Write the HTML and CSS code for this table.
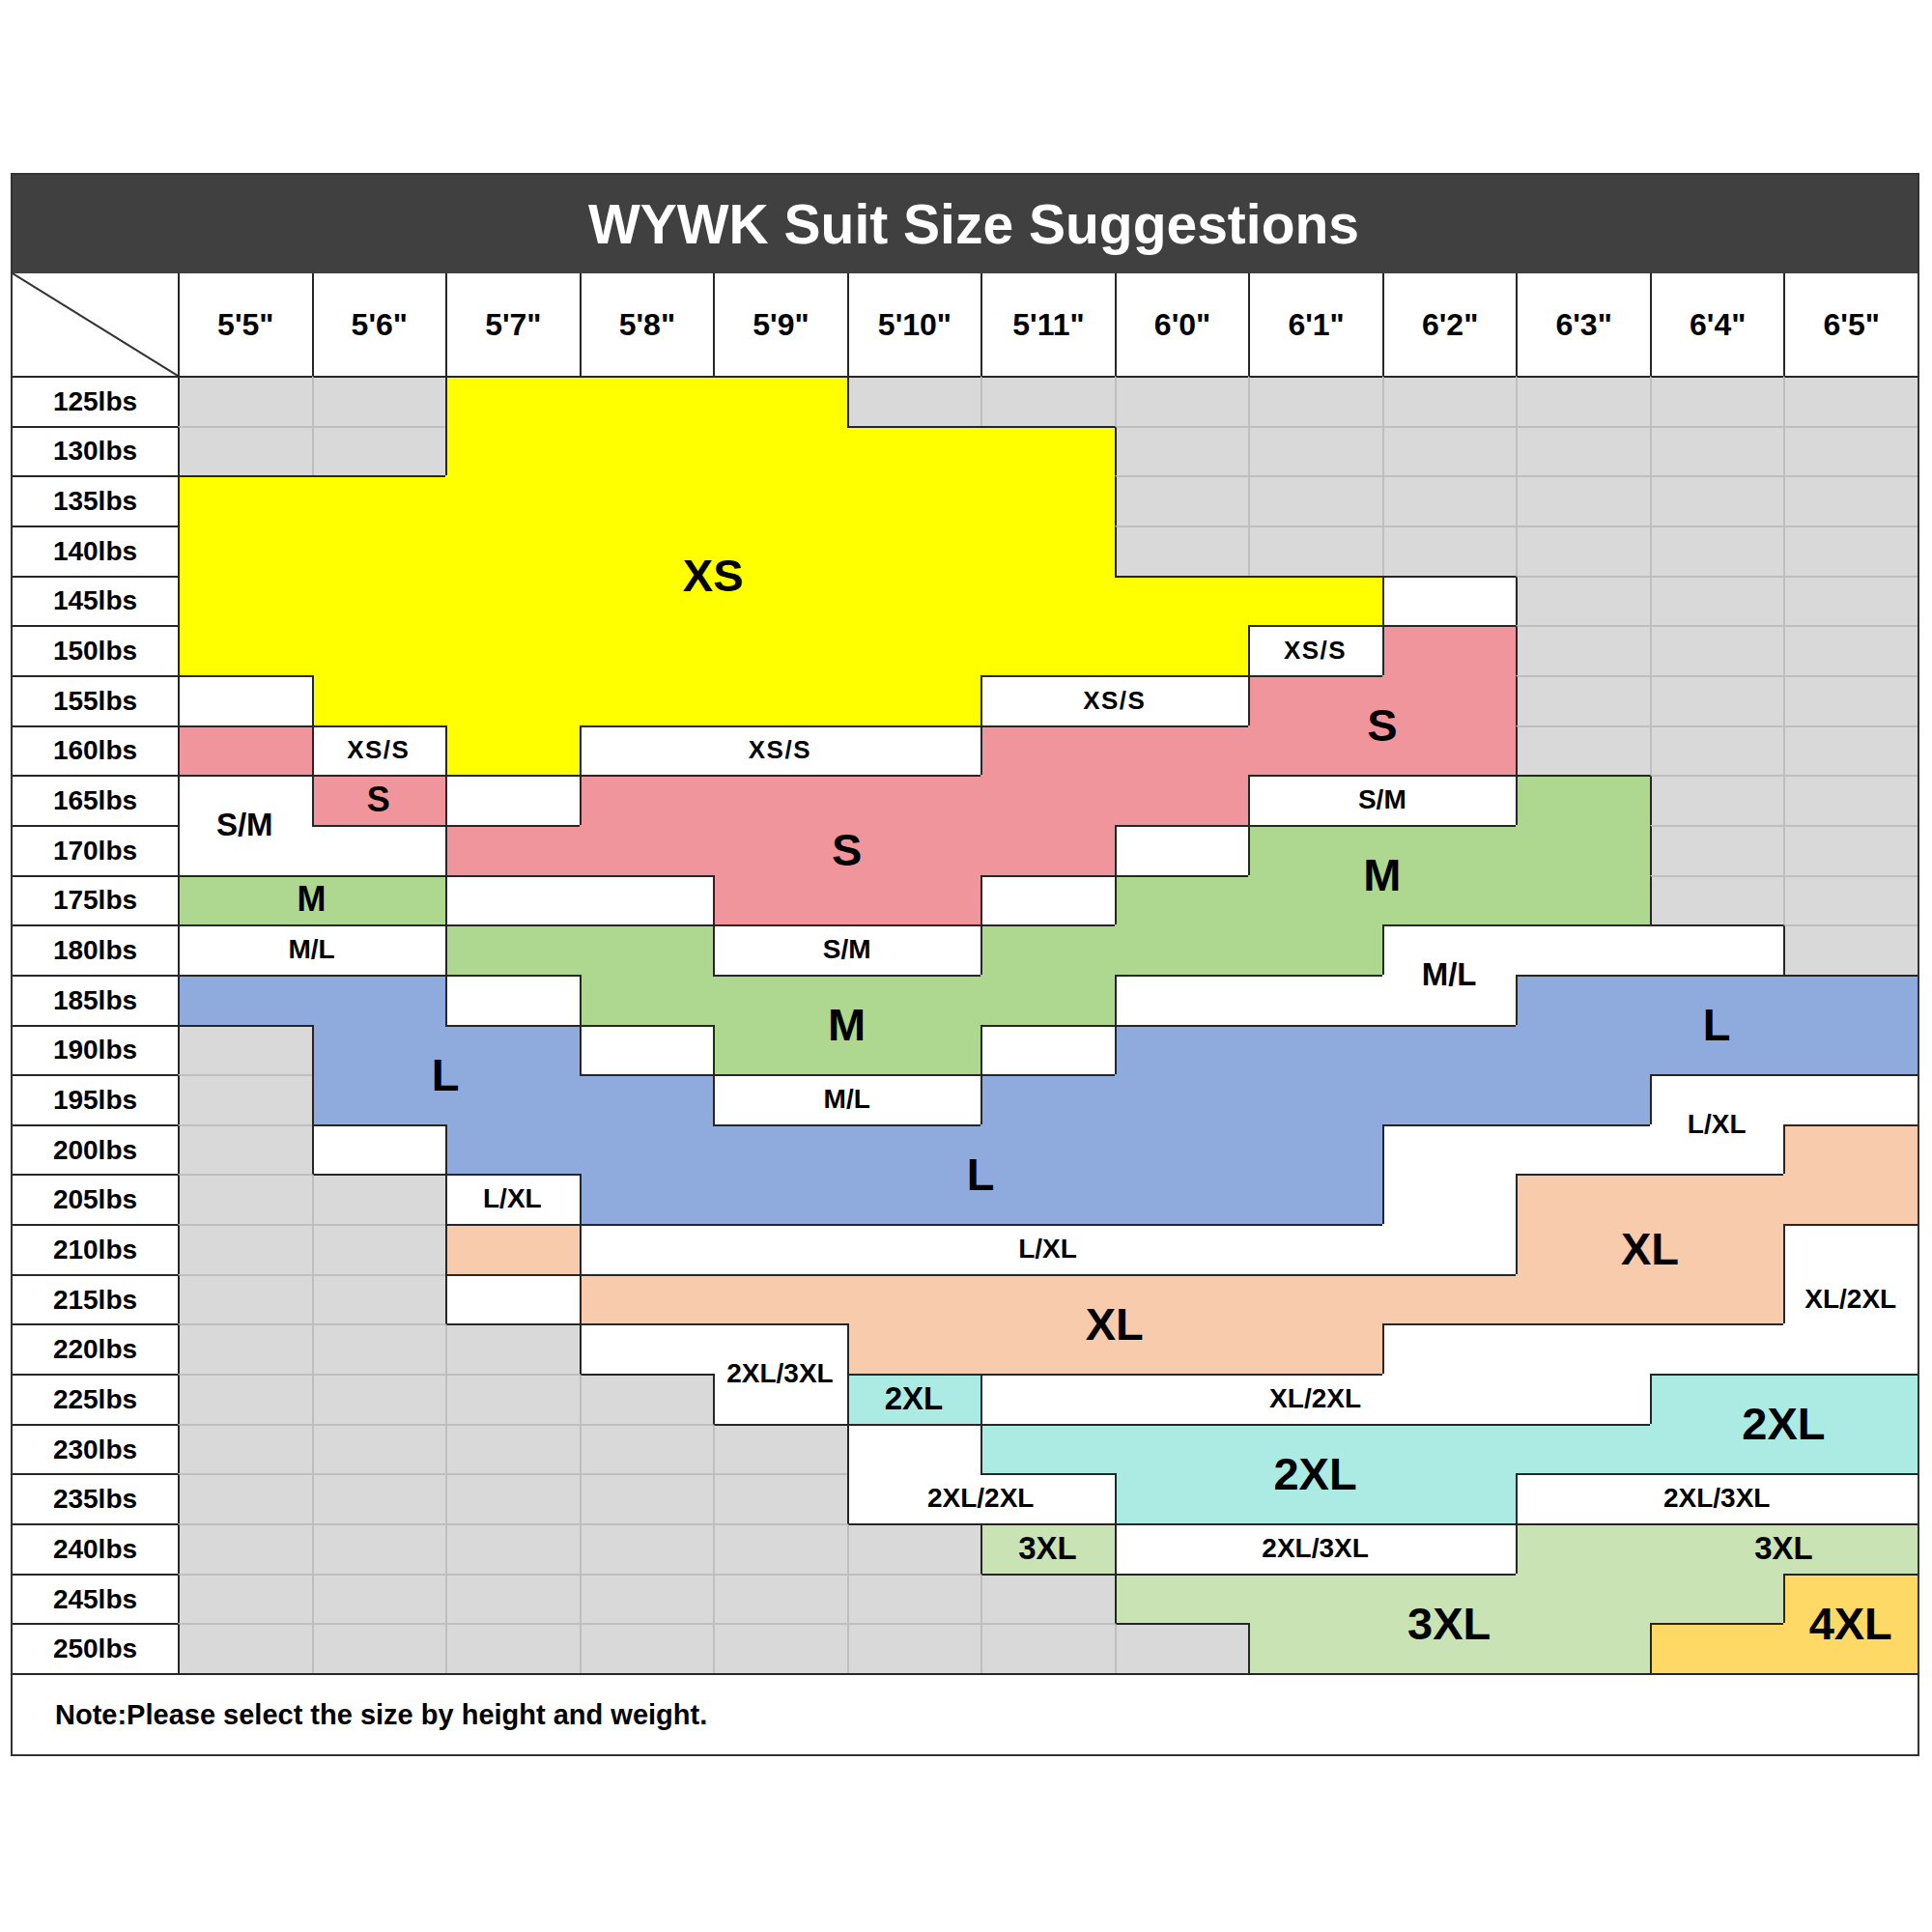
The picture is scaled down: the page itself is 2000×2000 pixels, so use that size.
FILE: index.html
```html
<!DOCTYPE html>
<html lang="en">
<head>
<meta charset="utf-8">
<title>WYWK Suit Size Suggestions</title>
<link rel="stylesheet" href="styles.css">
</head>
<body>
<div class="chart">
  <div class="title">WYWK Suit Size Suggestions</div>
  <div class="table" id="table"></div>
  <div class="note">Note:Please select the size by height and weight.</div>
</div>
<script src="script.js"></script>
</body>
</html>
```

FILE: styles.css
```css
* { box-sizing: border-box; }
body {
  margin: 0;
  background: #ffffff;
  font-family: "Liberation Sans", Arial, sans-serif;
  font-weight: bold;
  color: #000;
}
.chart {
  margin: 179px 0 0 11px;
  width: 1976px;
  border: 2px solid #333333;
}
.title {
  height: 102px;
  background: #404040;
  color: #ffffff;
  font-size: 57px;
  display: flex;
  align-items: center;
  justify-content: center;
  padding-left: 18px;
}
.table {
  display: grid;
  grid-template-columns: 171px repeat(13, 1fr);
  grid-template-rows: 106px repeat(26, 1fr);
  height: 1449px;
}
.corner { position: relative; background: #fff; }
.corner svg { display: block; width: 100%; height: 100%; }
.hcell {
  background: #fff;
  border-left: 2px solid #262626;
  display: flex;
  align-items: center;
  justify-content: center;
  font-size: 32px;
}
.rlabel {
  background: #fff;
  border-top: 2px solid #262626;
  display: flex;
  align-items: center;
  justify-content: center;
  font-size: 28px;
}
.cell { background: #fff; }
.bt-d { border-top: 2px solid #262626; }
.bt-l { border-top: 2px solid #bfbfbf; }
.bl-d { border-left: 2px solid #262626; }
.bl-l { border-left: 2px solid #bfbfbf; }

.c-gray { background: #d9d9d9; }
.c-yel { background: #ffff00; }
.c-pink { background: #f1959d; }
.c-green { background: #aed78f; }
.c-blue { background: #8faadc; }
.c-peach { background: #f8cbad; }
.c-cyan { background: #abebe3; }
.c-lgreen { background: #c9e3b5; }
.c-gold { background: #ffd966; }
.c-white { background: #ffffff; }

.lbl {
  z-index: 1;
  display: flex;
  align-items: center;
  justify-content: center;
  white-space: nowrap;
  line-height: 1;
}
.lbl-lg { font-size: 47px; }
.lbl-mm { font-size: 36px; }
.lbl-md { font-size: 33px; }
.lbl-sm { font-size: 28px; }
.lbl-xs { font-size: 26px; letter-spacing: 1.5px; }

.note {
  height: 84px;
  border-top: 2px solid #262626;
  display: flex;
  align-items: center;
  padding-left: 44px;
  font-size: 29px;
}
```

FILE: script.js
```js
(function () {
  var table = document.getElementById('table');
  var heights = ["5'5\"", "5'6\"", "5'7\"", "5'8\"", "5'9\"", "5'10\"", "5'11\"", "6'0\"", "6'1\"", "6'2\"", "6'3\"", "6'4\"", "6'5\""];
  var map = [
    "..YYY........",
    "..YYYYY......",
    "YYYYYYY......",
    "YYYYYYY......",
    "YYYYYYYYYa...",
    "YYYYYYYYbP...",
    "cYYYYYddPP...",
    "peYfffPPPP...",
    "hqiPPPPPjjG..",
    "hhPPPPPkGGG..",
    "mmllPPnGGGG..",
    "ooGGrrGGGsss.",
    "BBtGGGGsssBBB",
    ".BBuGGvBBBBBB",
    ".BBBwwBBBBBxx",
    ".yBBBBBBBxxxE",
    "..zBBBBBBxEEE",
    "..FxxxxxxxEEA",
    "..CEEEEEEEEEA",
    "...DDEEEEAAAA",
    "....DTAAAAAUU",
    ".....HUUUUUUU",
    ".....HHUUUIII",
    "......JKKKLLL",
    ".......LLLLLO",
    "........LLLOO"
  ];
  var colorOf = {
    '.': 'c-gray', 'Y': 'c-yel', 'P': 'c-pink', 'p': 'c-pink', 'q': 'c-pink',
    'G': 'c-green', 'm': 'c-green', 'B': 'c-blue', 'E': 'c-peach', 'F': 'c-peach',
    'T': 'c-cyan', 'U': 'c-cyan', 'J': 'c-lgreen', 'L': 'c-lgreen', 'O': 'c-gold'
  };
  var labels = [
    ['XS', 2, 5, 2, 5, 'lg'],
    ['XS/S', 5, 5, 8, 8, 'xs'],
    ['XS/S', 6, 6, 6, 7, 'xs'],
    ['S', 6, 7, 8, 9, 'lg'],
    ['XS/S', 7, 7, 1, 1, 'xs'],
    ['XS/S', 7, 7, 3, 5, 'xs'],
    ['S', 8, 8, 1, 1, 'mm'],
    ['S/M', 8, 9, 0, 0, 'md'],
    ['S/M', 8, 8, 8, 9, 'sm'],
    ['S', 8, 10, 4, 5, 'lg'],
    ['M', 9, 10, 8, 9, 'lg'],
    ['M', 10, 10, 0, 1, 'mm'],
    ['M/L', 11, 11, 0, 1, 'sm'],
    ['S/M', 11, 11, 4, 5, 'sm'],
    ['M/L', 11, 12, 9, 9, 'md'],
    ['M', 12, 13, 4, 5, 'lg'],
    ['L', 12, 13, 11, 11, 'lg'],
    ['L', 13, 14, 1, 2, 'lg'],
    ['M/L', 14, 14, 4, 5, 'sm'],
    ['L/XL', 14, 15, 11, 11, 'sm'],
    ['L', 15, 16, 5, 6, 'lg'],
    ['L/XL', 16, 16, 2, 2, 'sm'],
    ['L/XL', 17, 17, 6, 6, 'sm'],
    ['XL', 16, 18, 10, 11, 'lg'],
    ['XL/2XL', 17, 19, 12, 12, 'sm'],
    ['XL', 18, 19, 6, 7, 'lg'],
    ['2XL/3XL', 19, 20, 4, 4, 'sm'],
    ['2XL', 20, 20, 5, 5, 'md'],
    ['XL/2XL', 20, 20, 8, 8, 'sm'],
    ['2XL', 20, 21, 11, 12, 'lg'],
    ['2XL', 21, 22, 8, 8, 'lg'],
    ['2XL/2XL', 22, 22, 5, 6, 'sm'],
    ['2XL/3XL', 22, 22, 10, 12, 'sm'],
    ['3XL', 23, 23, 6, 6, 'md'],
    ['2XL/3XL', 23, 23, 7, 9, 'sm'],
    ['3XL', 23, 23, 11, 12, 'md'],
    ['3XL', 24, 25, 9, 9, 'lg'],
    ['4XL', 24, 25, 12, 12, 'lg']
  ];

  function add(cls, rowStart, rowEnd, colStart, colEnd, text) {
    var el = document.createElement('div');
    el.className = cls;
    el.style.gridRow = rowStart + ' / ' + rowEnd;
    el.style.gridColumn = colStart + ' / ' + colEnd;
    if (text) el.textContent = text;
    table.appendChild(el);
    return el;
  }

  var corner = add('corner', 1, 2, 1, 2);
  corner.innerHTML = '<svg viewBox="0 0 100 100" preserveAspectRatio="none"><line x1="0" y1="0" x2="100" y2="100" stroke="#333" stroke-width="2" vector-effect="non-scaling-stroke"/></svg>';

  heights.forEach(function (h, c) {
    add('hcell', 1, 2, c + 2, c + 3, h);
  });

  map.forEach(function (row, r) {
    add('rlabel', r + 2, r + 3, 1, 2, (125 + r * 5) + 'lbs');
    for (var c = 0; c < row.length; c++) {
      var ch = row[c];
      var cls = 'cell ' + (colorOf[ch] || 'c-white');
      if (r === 0) cls += ' bt-d';
      else {
        var a = map[r - 1][c];
        if (a !== ch) cls += ' bt-d';
        else if (ch === '.') cls += ' bt-l';
      }
      if (c === 0) cls += ' bl-d';
      else {
        var l = row[c - 1];
        if (l !== ch) cls += ' bl-d';
        else if (ch === '.') cls += ' bl-l';
      }
      add(cls, r + 2, r + 3, c + 2, c + 3);
    }
  });

  labels.forEach(function (lb) {
    add('lbl lbl-' + lb[5], lb[1] + 2, lb[2] + 3, lb[3] + 2, lb[4] + 3, lb[0]);
  });
})();
```
